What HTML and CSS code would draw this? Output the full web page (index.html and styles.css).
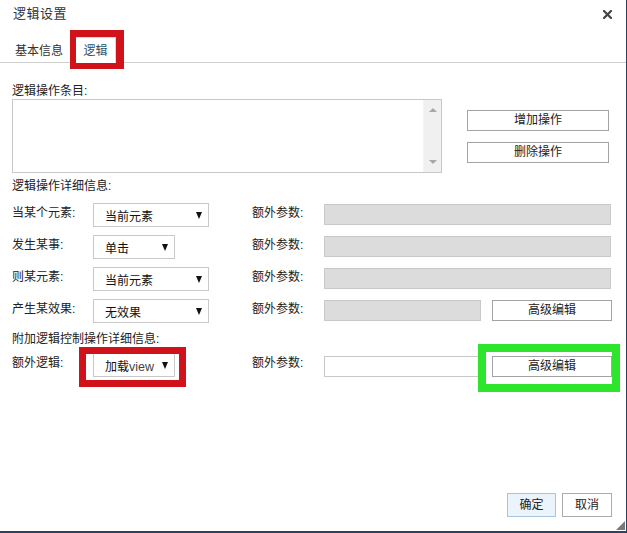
FILE: index.html
```html
<!DOCTYPE html>
<html lang="zh">
<head>
<meta charset="utf-8">
<title>逻辑设置</title>
<link rel="stylesheet" href="styles.css">
</head>
<body>
<div class="dialog">
  <div class="titlebar">
    <span class="title">逻辑设置</span>
    <span class="close"><svg width="9" height="9" viewBox="0 0 9 9"><path d="M1 1 L8 8 M8 1 L1 8" stroke="#444" stroke-width="2.2" stroke-linecap="square"/></svg></span>
  </div>
  <div class="tabs">
    <span class="tab">基本信息</span>
    <span class="tab tab-active">逻辑</span>
  </div>
  <div class="content">
    <div class="heading h1">逻辑操作条目:</div>
    <div class="list-row">
      <div class="listbox">
        <div class="scrollbar">
          <span class="arr-up"></span>
          <span class="arr-down"></span>
        </div>
      </div>
      <div class="list-buttons">
        <button class="btn btn-wide">增加操作</button>
        <button class="btn btn-wide">删除操作</button>
      </div>
    </div>
    <div class="heading h2">逻辑操作详细信息:</div>
    <div class="grid">
      <span class="label">当某个元素:</span>
      <div class="select w-long"><span>当前元素</span><span class="caret"></span></div>
      <span class="label">额外参数:</span>
      <div class="param"><div class="input gray full"></div></div>

      <span class="label">发生某事:</span>
      <div class="select w-short"><span>单击</span><span class="caret"></span></div>
      <span class="label">额外参数:</span>
      <div class="param"><div class="input gray full"></div></div>

      <span class="label">则某元素:</span>
      <div class="select w-long"><span>当前元素</span><span class="caret"></span></div>
      <span class="label">额外参数:</span>
      <div class="param"><div class="input gray full"></div></div>

      <span class="label">产生某效果:</span>
      <div class="select w-long"><span>无效果</span><span class="caret"></span></div>
      <span class="label">额外参数:</span>
      <div class="param"><div class="input gray half"></div><button class="btn btn-adv">高级编辑</button></div>
    </div>
    <div class="heading h3">附加逻辑控制操作详细信息:</div>
    <div class="grid extra">
      <span class="label">额外逻辑:</span>
      <div class="select w-short hl-red"><span>加载<span class="latin">view</span></span><span class="caret"></span></div>
      <span class="label">额外参数:</span>
      <div class="param"><div class="input white half"></div><button class="btn btn-adv hl-green">高级编辑</button></div>
    </div>
  </div>
  <div class="footer">
    <button class="btn btn-ok">确定</button>
    <button class="btn btn-cancel">取消</button>
  </div>
  <span class="grip"></span>
</div>
</body>
</html>
```
FILE: styles.css
```css
* { box-sizing: border-box; }
html, body { margin: 0; padding: 0; background: #fff; }
body {
  font-family: "Liberation Sans", "Noto Sans CJK SC", sans-serif;
  font-size: 12px;
  color: #222;
}
.dialog {
  position: relative;
  width: 627px;
  height: 533px;
  border-right: 1px solid #2f4160;
  border-bottom: 2px solid #2f4160;
  display: flex;
  flex-direction: column;
  background: #fff;
}
.titlebar {
  height: 28px;
  display: flex;
  align-items: center;
  justify-content: space-between;
  padding: 0 13px 3px 13px;
}
.title { font-size: 13px; color: #333; letter-spacing: 0.5px; }
.close { display: flex; margin-right: 1px; margin-top: 3px; }
.tabs {
  height: 35px;
  border-bottom: 1px solid #cfcfcf;
  display: flex;
  align-items: flex-end;
  padding-left: 8px;
  gap: 5px;
}
.tab {
  height: 26px;
  line-height: 27px;
  padding: 0 6px;
  font-size: 12px;
  color: #333;
  border: 1px solid transparent;
  margin-bottom: -1px;
}
.tab-active {
  position: relative;
  width: 41px;
  padding: 0;
  text-align: center;
  border-color: #d8d8d8;
  border-bottom-color: #fff;
  background: #fff;
  color: #2f5368;
}
.tab-active::after {
  content: "";
  position: absolute;
  left: -6px;
  right: -9px;
  top: -8px;
  bottom: -7px;
  border: 6px solid #d0121b;
  border-right-width: 8px;
  border-top-width: 7px;
  pointer-events: none;
}
.content { padding: 0 12px; }
.heading { line-height: 16px; font-size: 12px; color: #222; }
.h1 { margin-top: 20px; }
.h2 { margin-top: 4px; line-height: 18px; }
.h3 { margin-top: 8px; }
.list-row { display: flex; gap: 25px; }
.listbox {
  position: relative;
  width: 430px;
  height: 74px;
  border: 1px solid #c8c8c8;
  background: #fff;
}
.scrollbar {
  position: absolute;
  right: 0; top: 0; bottom: 0;
  width: 18px;
  background: #f0f0f0;
  border-left: 1px solid #f4f4f4;
}
.arr-up, .arr-down {
  position: absolute;
  left: 5px;
  width: 0; height: 0;
  border-left: 4px solid transparent;
  border-right: 4px solid transparent;
}
.arr-up { top: 8px; border-bottom: 4px solid #a8a8a8; }
.arr-down { bottom: 8px; border-top: 4px solid #a8a8a8; }
.list-buttons {
  display: flex;
  flex-direction: column;
  gap: 11px;
  padding-top: 11px;
}
.btn {
  font-family: "Liberation Sans", "Noto Sans CJK SC", sans-serif;
  font-size: 12px;
  color: #222;
  background: #fff;
  border: 1px solid #a3a3a3;
  padding: 0;
  height: 21px;
  line-height: 19px;
  border-radius: 0;
}
.btn-wide { width: 142px; }
.btn-adv { width: 120px; }
.grid {
  display: grid;
  grid-template-columns: 81px 159px 72px 1fr;
  row-gap: 8px;
  margin-top: 8px;
  align-items: start;
}
.label { line-height: 18px; padding-top: 1px; color: #222; }
.select {
  height: 24px;
  border: 1px solid #c9c9c9;
  display: flex;
  align-items: center;
  justify-content: space-between;
  padding: 0 6px 0 11px;
  font-size: 12px;
  color: #111;
}
.w-long { width: 116px; }
.w-short { width: 82px; }
.caret {
  width: 0; height: 0;
  border-left: 3.5px solid transparent;
  border-right: 3.5px solid transparent;
  border-top: 7px solid #111;
  margin-top: 1px;
}
.latin { font-family: "Liberation Sans", sans-serif; color: #444; font-size: 12.5px; }
.param { display: flex; gap: 11px; padding-top: 1px; }
.input { height: 21px; border: 1px solid #c9c9c9; }
.gray { background: #dcdcdc; }
.white { background: #fff; }
.full { width: 287px; }
.half { width: 157px; }
.extra { margin-top: 6px; }
.extra .param { padding-top: 3px; }
.hl-red { position: relative; }
.hl-red::after {
  content: "";
  position: absolute;
  left: -15px;
  right: -12px;
  top: -7px;
  bottom: -11px;
  border: 7px solid #d0121b;
  pointer-events: none;
}
.hl-green { position: relative; overflow: visible; }
.hl-green::after {
  content: "";
  position: absolute;
  left: -15px;
  right: -9px;
  top: -13px;
  bottom: -16px;
  border: 8px solid #2ee52e;
  pointer-events: none;
}
.footer {
  margin-top: auto;
  display: flex;
  justify-content: flex-end;
  gap: 6px;
  padding: 0 14px 14px 0;
}
.btn-ok {
  width: 49px;
  height: 24px;
  background: #eaf4fa;
  border-color: #a9c6d8;
}
.btn-cancel { width: 50px; height: 24px; border-color: #ababab; }
.grip {
  position: absolute;
  right: 1px;
  bottom: 1px;
  width: 0; height: 0;
  border-left: 9px solid transparent;
  border-bottom: 9px solid #7a7a7a;
}
```
